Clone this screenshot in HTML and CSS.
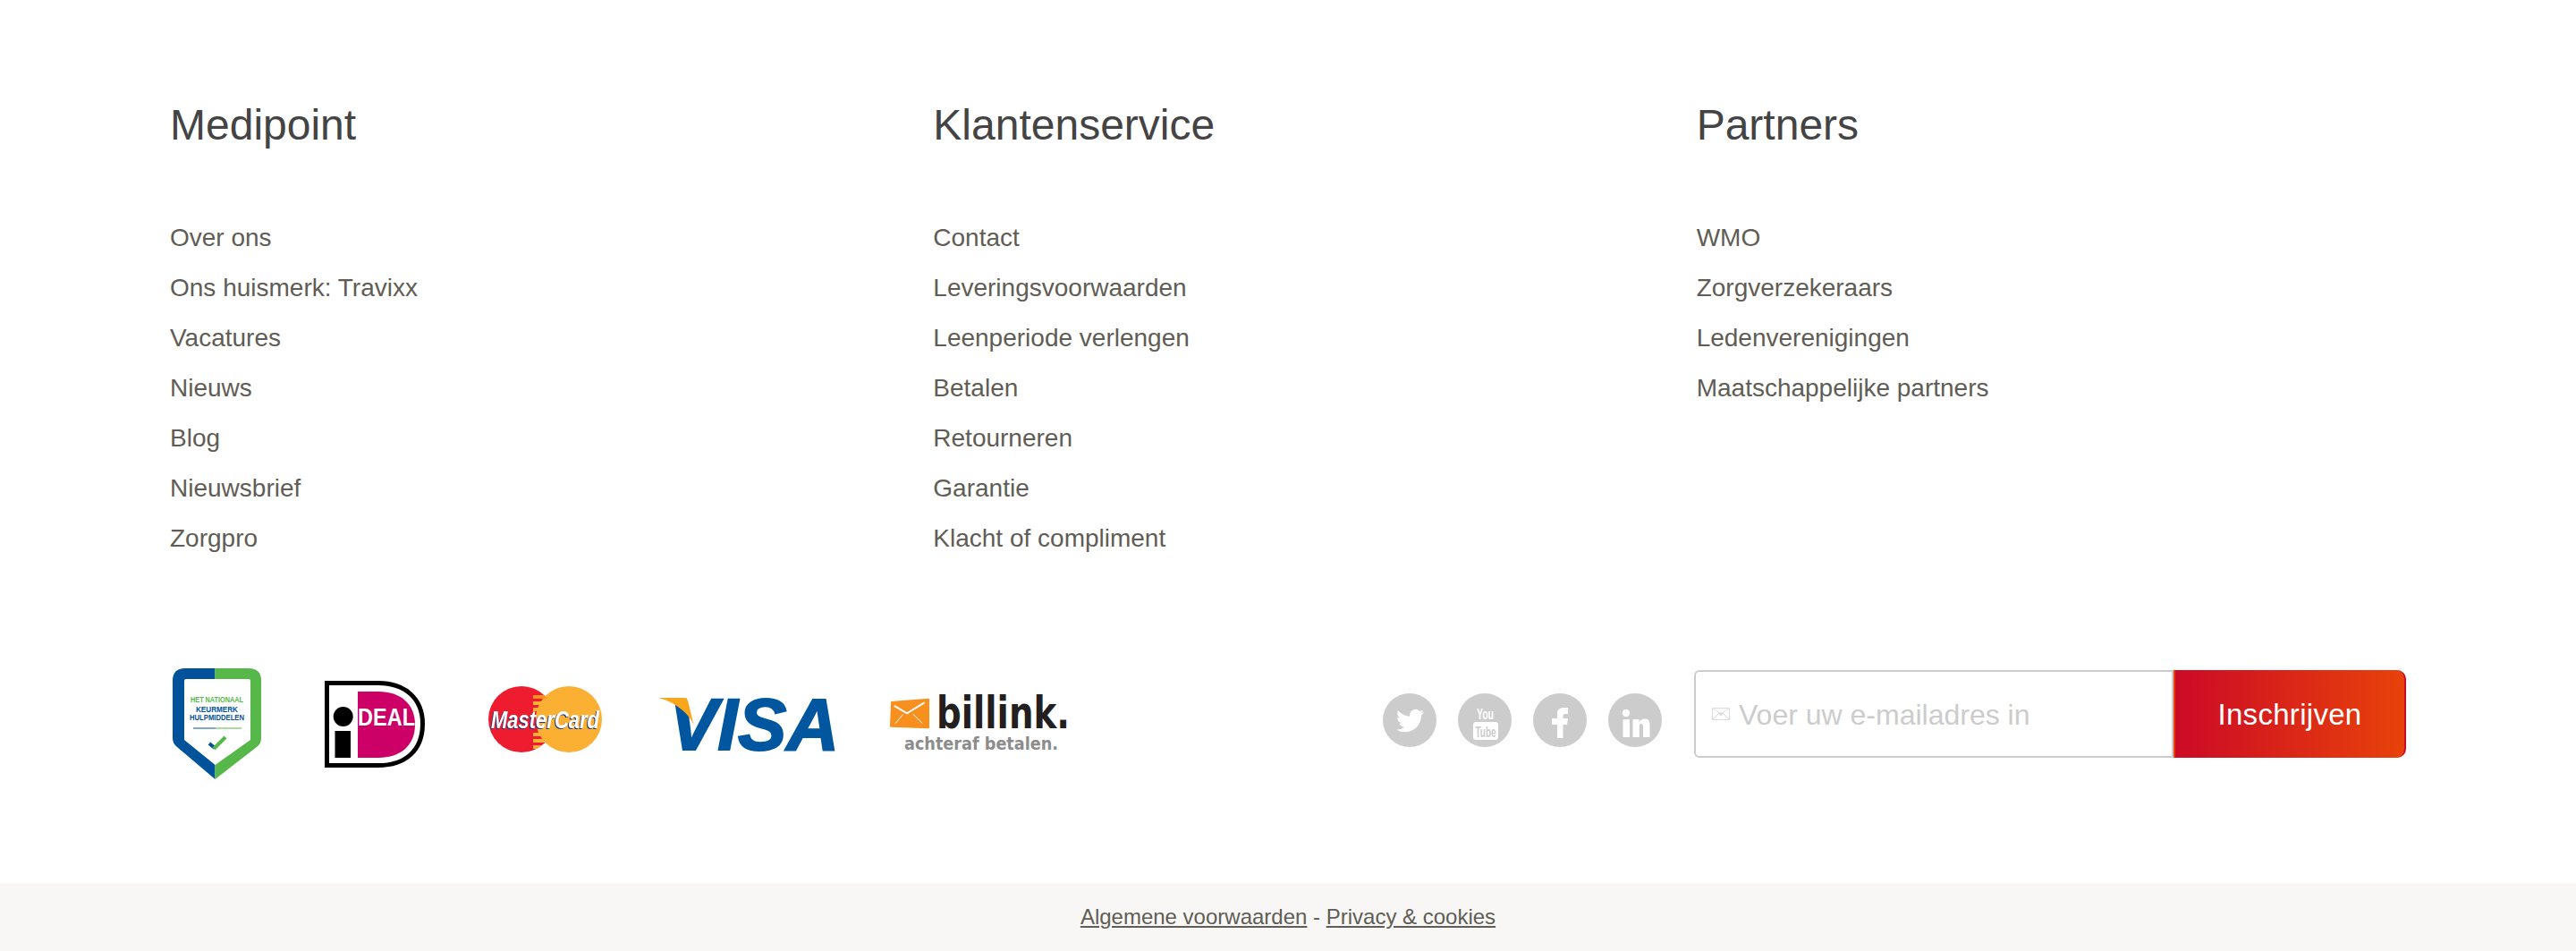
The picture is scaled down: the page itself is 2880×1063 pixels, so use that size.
FILE: index.html
```html
<!DOCTYPE html>
<html lang="nl">
<head>
<meta charset="utf-8">
<title>Medipoint footer</title>
<link rel="stylesheet" href="styles.css">
</head>
<body>
<footer class="site-footer">
  <div class="footer-main">
    <div class="cols">
      <section class="col">
        <h2 class="col-title">Medipoint</h2>
        <ul class="link-list">
          <li><a href="#">Over ons</a></li>
          <li><a href="#">Ons huismerk: Travixx</a></li>
          <li><a href="#">Vacatures</a></li>
          <li><a href="#">Nieuws</a></li>
          <li><a href="#">Blog</a></li>
          <li><a href="#">Nieuwsbrief</a></li>
          <li><a href="#">Zorgpro</a></li>
        </ul>
      </section>
      <section class="col">
        <h2 class="col-title">Klantenservice</h2>
        <ul class="link-list">
          <li><a href="#">Contact</a></li>
          <li><a href="#">Leveringsvoorwaarden</a></li>
          <li><a href="#">Leenperiode verlengen</a></li>
          <li><a href="#">Betalen</a></li>
          <li><a href="#">Retourneren</a></li>
          <li><a href="#">Garantie</a></li>
          <li><a href="#">Klacht of compliment</a></li>
        </ul>
      </section>
      <section class="col">
        <h2 class="col-title">Partners</h2>
        <ul class="link-list">
          <li><a href="#">WMO</a></li>
          <li><a href="#">Zorgverzekeraars</a></li>
          <li><a href="#">Ledenverenigingen</a></li>
          <li><a href="#">Maatschappelijke partners</a></li>
        </ul>
      </section>
    </div>

    <div class="brand-row">
      <div class="logos">
        <svg class="logo logo-shield" viewBox="-3 0 117 124" aria-label="Keurmerk">
          <path d="M47.5 0H14Q0 0 0 14V78Q0 84 5 88L47.5 124Z" fill="#00529b"/>
          <path d="M47.5 0H85Q99 0 99 14V78Q99 84 94 88L47.5 124Z" fill="#55b848"/>
          <path d="M13 14Q13 12 15 12H85Q87 12 87 14V80L47.5 108L13 80Z" fill="#fff"/>
          <text class="shield-text shield-green" x="20" y="38" textLength="59" lengthAdjust="spacingAndGlyphs">HET NATIONAAL</text>
          <text class="shield-text shield-blue" x="26" y="49" textLength="47" lengthAdjust="spacingAndGlyphs">KEURMERK</text>
          <text class="shield-text shield-blue" x="19" y="58" textLength="61" lengthAdjust="spacingAndGlyphs">HULPMIDDELEN</text>
          <path d="M23 67H48" stroke="#00529b" fill="none"/>
          <path d="M48 67H77" stroke="#55b848" fill="none"/>
          <path d="M41 84L47 89" stroke="#00529b" stroke-width="4" fill="none"/>
          <path d="M46 90L59 77" stroke="#55b848" stroke-width="4" fill="none"/>
        </svg>
        <svg class="logo logo-ideal" viewBox="0 0 127 124" aria-label="iDEAL">
          <path d="M2.500 16.500H60C90 16.500 109.500 34 109.500 62C109.500 92 90 108.500 60 108.500H2.500Z" fill="#fff" stroke="#000" stroke-width="5"/>
          <path d="M37 26H60C85 26 101 40 101 63C101 86 85 100 60 100H37Z" fill="#cc0066"/>
          <circle cx="20.700" cy="54" r="11"/>
          <rect x="11.500" y="70" width="17.500" height="30"/>
          <text class="ideal-text" x="37" y="64" textLength="64" lengthAdjust="spacingAndGlyphs">DEAL</text>
        </svg>
        <svg class="logo logo-mc" viewBox="0 0 134 124" aria-label="MasterCard">
          <defs>
            <clipPath id="lens"><circle cx="37" cy="57" r="37"/></clipPath>
          </defs>
          <circle cx="37" cy="57" r="37" fill="#ed1c2e"/>
          <circle cx="90" cy="57" r="37" fill="#fbb034"/>
          <g clip-path="url(#lens)" fill="#fbb034">
            <rect x="50" y="30" width="30" height="4" fill="#f7941d"/>
            <rect x="50" y="37" width="30" height="4"/>
            <rect x="50" y="44" width="30" height="4"/>
            <rect x="50" y="72" width="30" height="4"/>
            <rect x="50" y="79" width="30" height="4"/>
            <rect x="50" y="86" width="30" height="4"/>
          </g>
          <text class="mc-text" x="3" y="67" textLength="121" lengthAdjust="spacingAndGlyphs">MasterCard</text>
        </svg>
        <svg class="logo logo-visa" viewBox="0 0 204 124" aria-label="VISA">
          <text class="visa-text" x="12" y="91" textLength="190" lengthAdjust="spacingAndGlyphs">VISA</text>
          <path d="M0 33H28.600Q32 33 33 36.300L39.600 63C34 51 20 38 0 33Z" fill="#faa61a"/>
        </svg>
        <svg class="logo logo-billink" viewBox="0 0 202 124" aria-label="Billink">
          <path d="M1 38L42 34.700V66.300L0 64.700Z" fill="#f7901e" stroke="#f7901e" stroke-width="2" stroke-linejoin="round"/>
          <path d="M4.600 42.300L18 50.300L37 38.700" fill="none" stroke="#fff" stroke-width="2" stroke-linecap="round"/>
          <path d="M13 52L5.400 61.300M25 51.300L35 61.300" fill="none" stroke="#fff" stroke-linecap="round"/>
          <text class="billink-text" x="51" y="67" textLength="149" lengthAdjust="spacingAndGlyphs">billink.</text>
          <text class="billink-sub" x="15" y="91" textLength="172" lengthAdjust="spacingAndGlyphs">achteraf betalen.</text>
        </svg>
      </div>

      <div class="signup-group">
        <div class="socials">
          <a class="social" href="#" aria-label="Twitter">
            <svg viewBox="0 0 60 60">
              <g transform="translate(15 15) scale(1.3)"><path class="social-glyph" d="M23.953 4.57a10 10 0 01-2.825.775 4.958 4.958 0 002.163-2.723c-.951.555-2.005.959-3.127 1.184a4.92 4.92 0 00-8.384 4.482C7.69 8.095 4.067 6.13 1.64 3.162a4.822 4.822 0 00-.666 2.475c0 1.71.87 3.213 2.188 4.096a4.904 4.904 0 01-2.228-.616v.06a4.923 4.923 0 003.946 4.827 4.996 4.996 0 01-2.212.085 4.936 4.936 0 004.604 3.417 9.867 9.867 0 01-6.102 2.105c-.39 0-.779-.023-1.17-.067a13.995 13.995 0 007.557 2.209c9.053 0 13.998-7.496 13.998-13.985 0-.21 0-.42-.015-.63A9.935 9.935 0 0024 4.59z"/></g>
            </svg>
          </a>
          <a class="social" href="#" aria-label="YouTube">
            <svg viewBox="0 0 60 60">
              <text class="yt-you" x="21" y="29" textLength="19" lengthAdjust="spacingAndGlyphs">You</text>
              <rect class="social-glyph" x="17" y="32" width="28" height="20" rx="3"/>
              <text class="yt-tube" x="19.500" y="49" textLength="23" lengthAdjust="spacingAndGlyphs">Tube</text>
            </svg>
          </a>
          <a class="social" href="#" aria-label="Facebook">
            <svg viewBox="0 0 60 60">
              <path class="social-glyph" d="M27 50V35H21V28H27V23C27 18 30 16 34 16H39V23H36C34 23 33.500 24 33.500 26V28H39L38 35H33.500V50Z"/>
            </svg>
          </a>
          <a class="social" href="#" aria-label="LinkedIn">
            <svg viewBox="0 0 60 60">
              <circle class="social-glyph" cx="20" cy="22" r="4.200"/>
              <rect class="social-glyph" x="16.500" y="29" width="7.500" height="20"/>
              <path class="social-glyph" d="M27.500 29H34.500V32C36 30 38 28.500 41 28.500C45 28.500 46.500 31 46.500 35.500V49H39V37C39 35 38.500 34 36.800 34C35 34 34.800 35.500 34.800 37V49H27.500Z"/>
            </svg>
          </a>
        </div>
        <form class="signup">
          <label class="signup-field">
            <svg class="mail-icon" viewBox="0 0 20 14">
              <path d="M.5.5H19.500V13.500H.5ZM.5.5L10 7L19.500.5M.5 13.500L8 6M19.500 13.500L12 6" fill="none" stroke="#ddd"/>
              <circle cx="10" cy="7" r="2" fill="#ddd"/>
            </svg>
            <input class="signup-input" type="email" placeholder="Voer uw e-mailadres in">
          </label>
          <button class="signup-btn" type="button">Inschrijven</button>
        </form>
      </div>
    </div>
  </div>

  <div class="legal">
    <a href="#">Algemene voorwaarden</a> - <a href="#">Privacy &amp; cookies</a>
  </div>
</footer>
</body>
</html>
```

FILE: styles.css
```css
* { box-sizing: border-box; }

html, body {
  margin: 0;
  padding: 0;
  background: #fff;
}

body {
  font-family: "Liberation Sans", Arial, sans-serif;
  color: #5f5d55;
}

.footer-main {
  padding: 112px 190px 116px;
}

.cols {
  display: grid;
  grid-template-columns: repeat(3, 853.33px);
}

.col-title {
  margin: 0 0 70px;
  font-size: 48px;
  line-height: 56px;
  font-weight: 400;
  color: #444;
}

.link-list {
  margin: 0;
  padding: 0;
  list-style: none;
}

.link-list li {
  font-size: 28px;
  line-height: 56px;
}

.link-list a {
  color: #5f5d55;
  text-decoration: none;
}

.brand-row {
  display: flex;
  justify-content: space-between;
  align-items: flex-start;
  margin-top: 117px;
  height: 124px;
}

.logos {
  display: flex;
  gap: 56px;
}

.logo { display: block; height: 124px; overflow: visible; }
.logo-shield { width: 117px; }
.logo-ideal { width: 127px; }
.logo-mc { width: 134px; }
.logo-visa { width: 204px; }
.logo-billink { width: 202px; }

.shield-text {
  font-family: "Liberation Sans", sans-serif;
  font-weight: 700;
  font-size: 9px;
}
.shield-green { fill: #55b848; }
.shield-blue { fill: #00529b; }

.ideal-text {
  font-family: "Liberation Sans", sans-serif;
  font-weight: 700;
  font-size: 27px;
  fill: #fff;
}

.mc-text {
  font-family: "Liberation Sans", sans-serif;
  font-weight: 700;
  font-style: italic;
  font-size: 27px;
  fill: #fff;
  filter: drop-shadow(-1px 1px 0 #1b3b80);
}

.visa-text {
  font-family: "Liberation Sans", sans-serif;
  font-weight: 700;
  font-style: italic;
  font-size: 82px;
  fill: #00579f;
  stroke: #00579f;
  stroke-width: 2px;
}

.billink-text {
  font-family: "DejaVu Sans", sans-serif;
  font-weight: 700;
  font-size: 50px;
  fill: #231f20;
}

.billink-sub {
  font-family: "DejaVu Sans", sans-serif;
  font-weight: 700;
  font-size: 19px;
  fill: #8c8c8c;
}

.signup-group {
  display: flex;
  align-items: flex-start;
  gap: 36px;
  padding-top: 2px;
}

.socials {
  display: flex;
  gap: 24px;
  padding-top: 26px;
}

.social {
  display: block;
  width: 60px;
  height: 60px;
  border-radius: 50%;
  background: #ccc;
}

.social svg {
  display: block;
  width: 60px;
  height: 60px;
}

.social-glyph { fill: #fff; }

.yt-you {
  font-family: "Liberation Sans Narrow", "Liberation Sans", sans-serif;
  font-size: 17px;
  font-weight: 700;
  fill: #fff;
}

.yt-tube {
  font-family: "Liberation Sans Narrow", "Liberation Sans", sans-serif;
  font-size: 17px;
  font-weight: 700;
  fill: #ccc;
}

.signup {
  display: flex;
  width: 796px;
  height: 98px;
  margin: 0;
}

.signup-field {
  display: flex;
  align-items: center;
  gap: 10px;
  width: 536px;
  padding-left: 18px;
  background: #fff;
  border: 2px solid #ccc;
  border-radius: 6px 0 0 6px;
}

.mail-icon {
  flex: none;
  width: 20px;
  height: 14px;
}

.signup-input {
  flex: 1;
  min-width: 0;
  padding: 2px 0 0;
  border: 0;
  outline: 0;
  background: transparent;
  font-family: "Liberation Sans", Arial, sans-serif;
  font-size: 32px;
  color: #5f5d55;
}

.signup-input::placeholder {
  color: #ccc;
  opacity: 1;
}

.signup-btn {
  width: 260px;
  padding: 2px 0 0;
  border: 0;
  border-left: 2px solid #e8420a;
  border-right: 2px solid #cc0a26;
  border-radius: 0 10px 10px 0;
  background: linear-gradient(to right, #cc0a26, #e8420a);
  font-family: "Liberation Sans", Arial, sans-serif;
  font-size: 33px;
  letter-spacing: .3px;
  color: #fff;
}

.legal {
  height: 76px;
  background: #f8f7f5;
  text-align: center;
  font-size: 24px;
  line-height: 76px;
  color: #5f5d55;
}

.legal a {
  color: #5f5d55;
  text-decoration: underline;
}
```
